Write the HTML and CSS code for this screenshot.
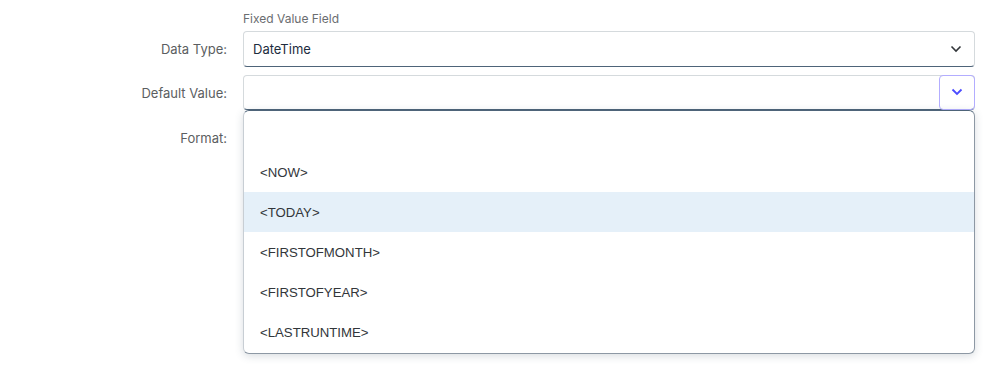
FILE: index.html
```html
<!DOCTYPE html>
<html>
<head>
<meta charset="utf-8">
<link rel="stylesheet" href="styles.css">
</head>
<body>
<div class="form">
  <div class="label spacer"></div>
  <div class="hint">Fixed Value Field</div>

  <div class="label">Data Type:</div>
  <div class="select">
    <span class="value">DateTime</span>
    <svg class="chev" width="12" height="8" viewBox="0 0 12 8"><path d="M1.5 1.5 L6 6 L10.5 1.5" fill="none" stroke="#32363a" stroke-width="1.6"/></svg>
  </div>

  <div class="label">Default Value:</div>
  <div class="combo-wrap">
    <div class="select combo">
      <span class="value"></span>
      <span class="btn"><svg width="12" height="8" viewBox="0 0 12 8"><path d="M1.5 1.5 L6 6 L10.5 1.5" fill="none" stroke="#4b4bff" stroke-width="1.8"/></svg></span>
    </div>
    <ul class="popup">
      <li class="item">&nbsp;</li>
      <li class="item">&lt;NOW&gt;</li>
      <li class="item active">&lt;TODAY&gt;</li>
      <li class="item">&lt;FIRSTOFMONTH&gt;</li>
      <li class="item">&lt;FIRSTOFYEAR&gt;</li>
      <li class="item">&lt;LASTRUNTIME&gt;</li>
    </ul>
  </div>

  <div class="label low">Format:</div>
  <div class="select blank"></div>
</div>
</body>
</html>
```
FILE: styles.css
```css
html, body { margin: 0; padding: 0; background: #ffffff; }
body { font-family: Inter, "Noto Sans", sans-serif; color: #32363a; min-height: 370px; }
.form {
  display: grid;
  grid-template-columns: 227px 732px;
  column-gap: 16px;
  row-gap: 8px;
  padding-top: 11px;
  align-items: center;
  min-height: 359px;
  align-content: start;
}
.spacer { height: 0; }
.hint {
  font-size: 12px;
  color: #6a6d70;
  line-height: 15px;
  margin-bottom: -3px;
}
.label {
  text-align: right;
  font-size: 13px;
  color: #5b5e61;
}
.label.low { padding-top: 3px; }
.select {
  box-sizing: border-box;
  height: 36px;
  border: 1px solid #d5dadd;
  border-bottom: 1px solid #4e6479;
  border-radius: 4px;
  background: #fff;
  display: flex;
  align-items: center;
  justify-content: space-between;
  padding: 0 10px 0 9px;
  font-size: 13px;
  color: #1d2d3e;
}
.chev { margin-right: 2px; }
.combo-wrap { position: relative; height: 35px; }
.combo { height: 35px; padding-right: 0; }
.btn {
  box-sizing: border-box;
  width: 36px;
  height: 35px;
  margin: -1px -1px 0 0;
  border: 1px solid #b3adff;
  border-radius: 4px;
  display: flex;
  align-items: center;
  justify-content: center;
}
.blank { border-color: #fff; }
.popup {
  position: absolute;
  left: 0;
  top: 35px;
  width: 732px;
  box-sizing: border-box;
  margin: 0;
  padding: 1px 0 1px;
  list-style: none;
  background: #fff;
  border: 1px solid #8d98a4;
  border-top-color: #4e6479;
  border-left-color: #c8ced4;
  border-radius: 6px;
  box-shadow: 0 2px 8px rgba(60, 80, 100, 0.2);
  z-index: 2;
}
.item {
  height: 40px;
  display: flex;
  align-items: center;
  padding-left: 16px;
  font-family: "Liberation Sans", Arial, sans-serif;
  font-size: 13.2px;
  color: #32363a;
}
.item.active { background: #e5f0f9; }
```
